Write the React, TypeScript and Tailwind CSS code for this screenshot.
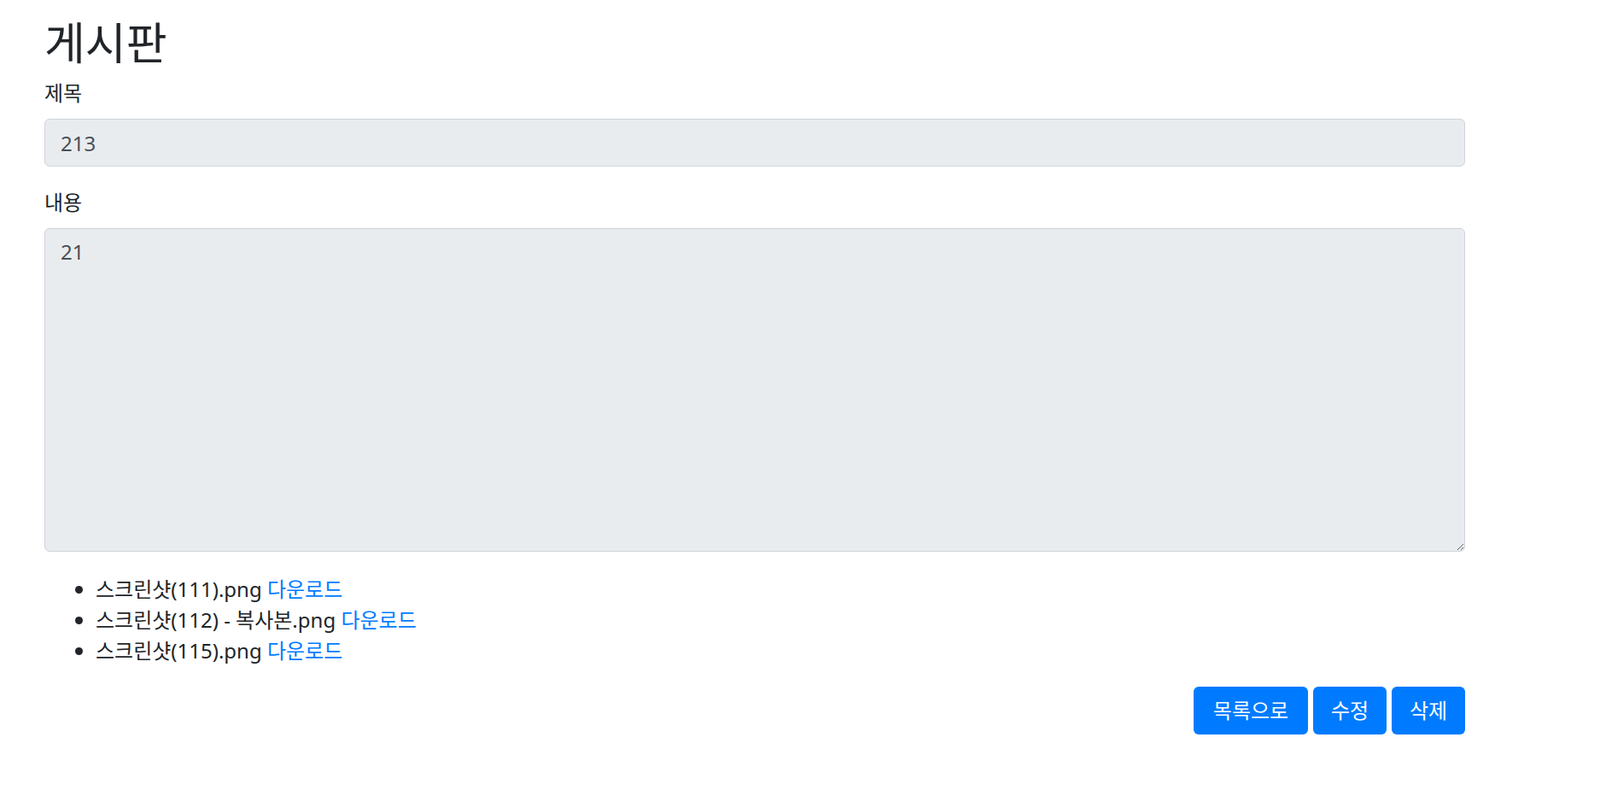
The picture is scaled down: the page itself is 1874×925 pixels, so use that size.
import React from "react";

const files = [
  { name: "스크린샷(111).png" },
  { name: "스크린샷(112) - 복사본.png" },
  { name: "스크린샷(115).png" },
];

const font = { fontFamily: '"Noto Sans", "Noto Sans CJK KR", sans-serif' };

export default function App() {
  return (
    <div className="min-h-screen bg-white text-[#212529]" style={font}>
      <div className="ml-[52px] w-[1664px] pt-[21px]">
        <h2 className="text-[52px] leading-[58px] font-normal mb-[12px]">게시판</h2>

        <div className="mb-[24px]">
          <label className="block text-[24px] leading-[36px] mb-[12px]">제목</label>
          <input
            readOnly
            value="213"
            className="block w-full h-[56px] px-[18px] text-[24px] text-[#495057] bg-[#e9ecef] border border-[#ced4da] rounded-[6px] outline-none"
          />
        </div>

        <div className="mb-[24px]">
          <label className="block text-[24px] leading-[36px] mb-[12px]">내용</label>
          <textarea
            readOnly
            value="21"
            className="block w-full h-[379px] px-[18px] py-[9px] text-[24px] leading-[36px] text-[#495057] bg-[#e9ecef] border border-[#ced4da] rounded-[6px] outline-none"
          />
        </div>

        <ul className="list-disc pl-[60px] mt-[26px] mb-[24px] text-[24px] leading-[36px]">
          {files.map((f, i) => (
            <li key={i}>
              {f.name}{" "}
              <a href="#" className="text-[#007bff]">
                다운로드
              </a>
            </li>
          ))}
        </ul>

        <div className="flex justify-end gap-[6px]">
          <button className="w-[134px] h-[56px] rounded-[6px] bg-[#007bff] text-white text-[24px]">목록으로</button>
          <button className="w-[86px] h-[56px] rounded-[6px] bg-[#007bff] text-white text-[24px]">수정</button>
          <button className="w-[86px] h-[56px] rounded-[6px] bg-[#007bff] text-white text-[24px]">삭제</button>
        </div>
      </div>
    </div>
  );
}
